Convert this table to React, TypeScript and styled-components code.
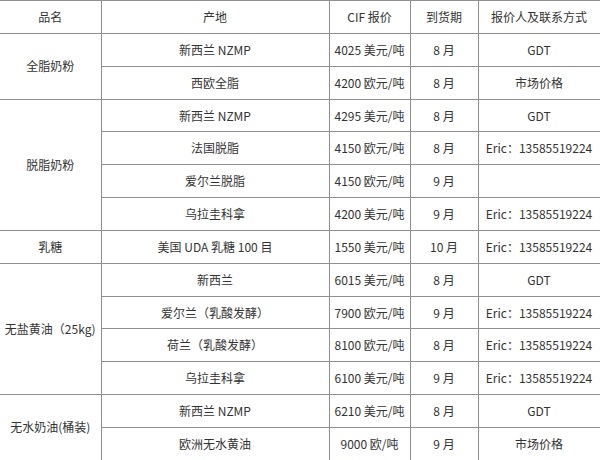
import React from 'react';
import styled, { createGlobalStyle } from 'styled-components';

const GlobalStyle = createGlobalStyle`
  html, body {
    margin: 0;
    padding: 0;
    background: #fff;
    overflow: hidden;
  }
`;

const Sheet = styled.div`
  width: 600px;
  height: 460px;
  overflow: hidden;
  background: #fff;
`;

const Table = styled.table`
  width: 600px;
  table-layout: fixed;
  border-collapse: collapse;
  font-family: 'Noto Sans CJK SC', 'Liberation Sans', sans-serif;
  font-size: 12px;
  color: #333;
`;

const Row = styled.tr<{ $head?: boolean }>`
  height: ${p => (p.$head ? '33px' : '32.83px')};
`;

const Cell = styled.td<{ $first?: boolean }>`
  padding: 0;
  text-align: center;
  vertical-align: middle;
  white-space: nowrap;
  border: 1px solid #8f8f8f;
  border-left: ${p => (p.$first ? 'none' : '1px solid #8f8f8f')};
  line-height: 16px;
`;

const HeadCell = styled(Cell).attrs({ as: 'th' })`
  font-weight: 400;
`;

type Item = {
  origin: string;
  price: string;
  month: string;
  contact: string;
};

type Group = {
  name: string;
  items: Item[];
};

const ERIC = 'Eric：13585519224';

const groups: Group[] = [
  {
    name: '全脂奶粉',
    items: [
      { origin: '新西兰 NZMP', price: '4025 美元/吨', month: '8 月', contact: 'GDT' },
      { origin: '西欧全脂', price: '4200 欧元/吨', month: '8 月', contact: '市场价格' },
    ],
  },
  {
    name: '脱脂奶粉',
    items: [
      { origin: '新西兰 NZMP', price: '4295 美元/吨', month: '8 月', contact: 'GDT' },
      { origin: '法国脱脂', price: '4150 欧元/吨', month: '8 月', contact: ERIC },
      { origin: '爱尔兰脱脂', price: '4150 欧元/吨', month: '9 月', contact: '' },
      { origin: '乌拉圭科拿', price: '4200 美元/吨', month: '9 月', contact: ERIC },
    ],
  },
  {
    name: '乳糖',
    items: [
      { origin: '美国 UDA 乳糖 100 目', price: '1550 美元/吨', month: '10 月', contact: ERIC },
    ],
  },
  {
    name: '无盐黄油（25kg)',
    items: [
      { origin: '新西兰', price: '6015 美元/吨', month: '8 月', contact: 'GDT' },
      { origin: '爱尔兰（乳酸发酵）', price: '7900 欧元/吨', month: '9 月', contact: ERIC },
      { origin: '荷兰（乳酸发酵）', price: '8100 欧元/吨', month: '8 月', contact: ERIC },
      { origin: '乌拉圭科拿', price: '6100 美元/吨', month: '9 月', contact: ERIC },
    ],
  },
  {
    name: '无水奶油(桶装)',
    items: [
      { origin: '新西兰 NZMP', price: '6210 美元/吨', month: '8 月', contact: 'GDT' },
      { origin: '欧洲无水黄油', price: '9000 欧/吨', month: '9 月', contact: '市场价格' },
    ],
  },
];

function App() {
  return (
    <Sheet>
      <GlobalStyle />
      <Table>
        <colgroup>
          <col style={{ width: 101 }} />
          <col style={{ width: 228 }} />
          <col style={{ width: 81 }} />
          <col style={{ width: 68 }} />
          <col style={{ width: 122 }} />
        </colgroup>
        <thead>
          <Row $head>
            <HeadCell $first>品名</HeadCell>
            <HeadCell>产地</HeadCell>
            <HeadCell>CIF 报价</HeadCell>
            <HeadCell>到货期</HeadCell>
            <HeadCell>报价人及联系方式</HeadCell>
          </Row>
        </thead>
        <tbody>
          {groups.map(group =>
            group.items.map((item, i) => (
              <Row key={group.name + i}>
                {i === 0 && (
                  <Cell $first rowSpan={group.items.length}>
                    {group.name}
                  </Cell>
                )}
                <Cell>{item.origin}</Cell>
                <Cell>{item.price}</Cell>
                <Cell>{item.month}</Cell>
                <Cell>{item.contact}</Cell>
              </Row>
            ))
          )}
        </tbody>
      </Table>
    </Sheet>
  );
}

export default App;
